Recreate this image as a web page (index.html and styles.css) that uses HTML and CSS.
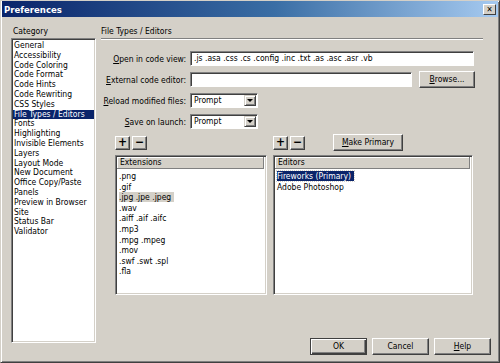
FILE: index.html
```html
<!DOCTYPE html>
<html lang="en">
<head>
    <meta charset="UTF-8">
    <title>Preferences</title>
    <link rel="stylesheet" href="styles.css">
</head>
<body>
    <div class="dialog">
        <div class="titlebar">
            <span class="title">Preferences</span>
            <span class="close">&#x2715;</span>
        </div>
        <div class="body">
            <div class="category">
                <div class="caption">Category</div>
                <ul class="listbox">
                    <li>General</li>
                    <li>Accessibility</li>
                    <li>Code Coloring</li>
                    <li>Code Format</li>
                    <li>Code Hints</li>
                    <li>Code Rewriting</li>
                    <li>CSS Styles</li>
                    <li class="selected">File Types / Editors</li>
                    <li>Fonts</li>
                    <li>Highlighting</li>
                    <li>Invisible Elements</li>
                    <li>Layers</li>
                    <li>Layout Mode</li>
                    <li>New Document</li>
                    <li>Office Copy/Paste</li>
                    <li>Panels</li>
                    <li>Preview in Browser</li>
                    <li>Site</li>
                    <li>Status Bar</li>
                    <li>Validator</li>
                </ul>
            </div>

            <div class="main">
                <div class="section-head">File Types / Editors</div>

                <div class="form">
                    <div class="row">
                        <label><u>O</u>pen in code view:</label>
                        <div class="field wide">.js .asa .css .cs .config .inc .txt .as .asc .asr .vb</div>
                    </div>
                    <div class="row">
                        <label><u>E</u>xternal code editor:</label>
                        <div class="field medium"></div>
                        <div class="btn browse"><u>B</u>rowse...</div>
                    </div>
                    <div class="row">
                        <label><u>R</u>eload modified files:</label>
                        <div class="select"><span>Prompt</span><span class="arrow"></span></div>
                    </div>
                    <div class="row">
                        <label><u>S</u>ave on launch:</label>
                        <div class="select"><span>Prompt</span><span class="arrow"></span></div>
                    </div>
                </div>

                <div class="lists">
                    <div class="list-col ext">
                        <div class="toolbar">
                            <div class="btn small">+</div>
                            <div class="btn small">&minus;</div>
                        </div>
                        <div class="listview">
                            <div class="lv-head">Extensions</div>
                            <ul>
                                <li>.png</li>
                                <li>.gif</li>
                                <li><span class="hilite">.jpg .jpe .jpeg</span></li>
                                <li>.wav</li>
                                <li>.aiff .aif .aifc</li>
                                <li>.mp3</li>
                                <li>.mpg .mpeg</li>
                                <li>.mov</li>
                                <li>.swf .swt .spl</li>
                                <li>.fla</li>
                            </ul>
                        </div>
                    </div>
                    <div class="list-col editors">
                        <div class="toolbar">
                            <div class="btn small">+</div>
                            <div class="btn small">&minus;</div>
                            <div class="btn primary"><u>M</u>ake Primary</div>
                        </div>
                        <div class="listview">
                            <div class="lv-head">Editors</div>
                            <ul>
                                <li><span class="current">Fireworks (Primary)</span></li>
                                <li>Adobe Photoshop</li>
                            </ul>
                        </div>
                    </div>
                </div>

                <div class="actions">
                    <div class="btn action default">OK</div>
                    <div class="btn action">Cancel</div>
                    <div class="btn action"><u>H</u>elp</div>
                </div>
            </div>
        </div>
    </div>
</body>
</html>
```

FILE: styles.css
```css
body {
    margin: 0;
    background-color: #d4d0c8;
    font-family: 'DejaVu Sans Condensed', 'DejaVu Sans', sans-serif;
    font-stretch: condensed;
    font-size: 8.5px;
    color: #000;
    overflow: hidden;
}
ul {
    list-style: none;
    margin: 0;
    padding: 0;
}
u {
    text-decoration: underline;
}
.dialog {
    width: 500px;
    height: 363px;
    box-sizing: border-box;
    border: 1px solid;
    border-color: #d4d0c8 #404040 #404040 #d4d0c8;
    box-shadow: inset 1px 1px #fff, inset -1px -1px #808080;
    display: flex;
    flex-direction: column;
}
.titlebar {
    height: 16px;
    margin: 0 1px;
    background: linear-gradient(to right, #0a246a, #3a6ea5 55%, #a6caf0);
    display: flex;
    align-items: center;
    justify-content: space-between;
    padding: 0 2px 0 2px;
}
.title {
    color: #fff;
    font-weight: bold;
    font-size: 9.5px;
}
.close {
    width: 13px;
    height: 11px;
    background-color: #d4d0c8;
    border: 1px solid;
    border-color: #fff #404040 #404040 #fff;
    box-sizing: border-box;
    font-size: 8px;
    font-weight: bold;
    line-height: 9px;
    text-align: center;
    font-family: 'DejaVu Sans', sans-serif;
}
.body {
    flex: 1;
    display: flex;
}
.category {
    width: 85px;
    margin-left: 10px;
}
.caption {
    padding: 7px 0 0 2px;
    line-height: 14px;
}
.listbox {
    height: 305px;
    box-sizing: border-box;
    background-color: #fff;
    border: 1px solid;
    border-color: #808080 #fff #fff #808080;
    box-shadow: inset 1px 1px #404040, inset -1px -1px #d4d0c8;
    padding: 2px 1px;
}
.listbox li {
    line-height: 9.8px;
    padding-left: 1px;
}
.listbox li.selected {
    background-color: #0a246a;
    color: #fff;
}
.main {
    width: 390px;
    margin-left: 5px;
    display: flex;
    flex-direction: column;
    padding-bottom: 7px;
}
.section-head {
    margin-right: 8px;
    padding: 7px 0 0 0;
    line-height: 14px;
    border-bottom: 1px solid #808080;
    box-shadow: 0 1px #fff;
}
.form {
    margin-top: 12px;
    display: flex;
    flex-direction: column;
    gap: 6px;
}
.row {
    display: flex;
    align-items: center;
    height: 15px;
}
.row label {
    width: 85px;
    padding-right: 4px;
    text-align: right;
    white-space: nowrap;
}
.field {
    height: 15px;
    box-sizing: border-box;
    background-color: #fff;
    border: 1px solid;
    border-color: #808080 #fff #fff #808080;
    box-shadow: inset 1px 1px #404040;
    padding: 0 3px;
    line-height: 13px;
    white-space: nowrap;
}
.field.wide {
    width: 284px;
}
.field.medium {
    width: 222px;
}
.btn {
    box-sizing: border-box;
    background-color: #d4d0c8;
    border: 1px solid;
    border-color: #fff #404040 #404040 #fff;
    box-shadow: inset -1px -1px #808080;
    text-align: center;
    white-space: nowrap;
}
.browse {
    width: 56px;
    height: 17px;
    line-height: 15px;
    margin-left: 7px;
}
.select {
    width: 68px;
    height: 15px;
    box-sizing: border-box;
    background-color: #fff;
    border: 1px solid;
    border-color: #808080 #fff #fff #808080;
    box-shadow: inset 1px 1px #404040;
    display: flex;
    justify-content: space-between;
    padding-left: 3px;
    line-height: 13px;
}
.arrow {
    width: 12px;
    height: 11px;
    margin: 1px 1px 0 0;
    box-sizing: border-box;
    background-color: #d4d0c8;
    border: 1px solid;
    border-color: #d4d0c8 #404040 #404040 #d4d0c8;
    box-shadow: inset 1px 1px #fff, inset -1px -1px #808080;
    position: relative;
}
.arrow::after {
    content: '';
    position: absolute;
    left: 2px;
    top: 3px;
    border-left: 3px solid transparent;
    border-right: 3px solid transparent;
    border-top: 3px solid #000;
}
.lists {
    display: flex;
    gap: 6px;
    margin: 5px 0 0 14px;
}
.ext {
    width: 152px;
}
.editors {
    width: 200px;
}
.toolbar {
    display: flex;
    align-items: center;
    gap: 2px;
    height: 17px;
    margin-bottom: 4px;
}
.btn.small {
    width: 15px;
    height: 14px;
    line-height: 11px;
    font-size: 12px;
    font-weight: bold;
    font-family: 'DejaVu Sans', sans-serif;
}
.btn.primary {
    width: 70px;
    height: 17px;
    line-height: 15px;
    margin-left: 26px;
}
.listview {
    height: 140px;
    box-sizing: border-box;
    background-color: #fff;
    border: 1px solid;
    border-color: #808080 #fff #fff #808080;
    box-shadow: inset 1px 1px #404040, inset -1px -1px #d4d0c8;
    padding: 1px 2px 2px 1px;
}
.lv-head {
    height: 11px;
    line-height: 11px;
    background-color: #d4d0c8;
    border-bottom: 1px solid #808080;
    border-right: 1px solid #808080;
    box-shadow: inset 1px 1px #fff;
    padding-left: 3px;
}
.listview ul {
    padding: 2px 0 0 2px;
}
.listview li {
    line-height: 10.6px;
}
.hilite {
    background-color: #d4d0c8;
    padding-right: 3px;
}
.current {
    background-color: #0a246a;
    color: #fff;
    outline: 1px dotted #d4d0c8;
    padding-right: 3px;
}
.actions {
    margin-top: auto;
    display: flex;
    justify-content: flex-end;
    gap: 5px;
}
.btn.action {
    width: 57px;
    height: 17px;
    line-height: 15px;
}
.btn.default {
    border-color: #404040;
    box-shadow: inset 1px 1px #fff, inset -1px -1px #404040, inset -2px -2px #808080;
}
```
